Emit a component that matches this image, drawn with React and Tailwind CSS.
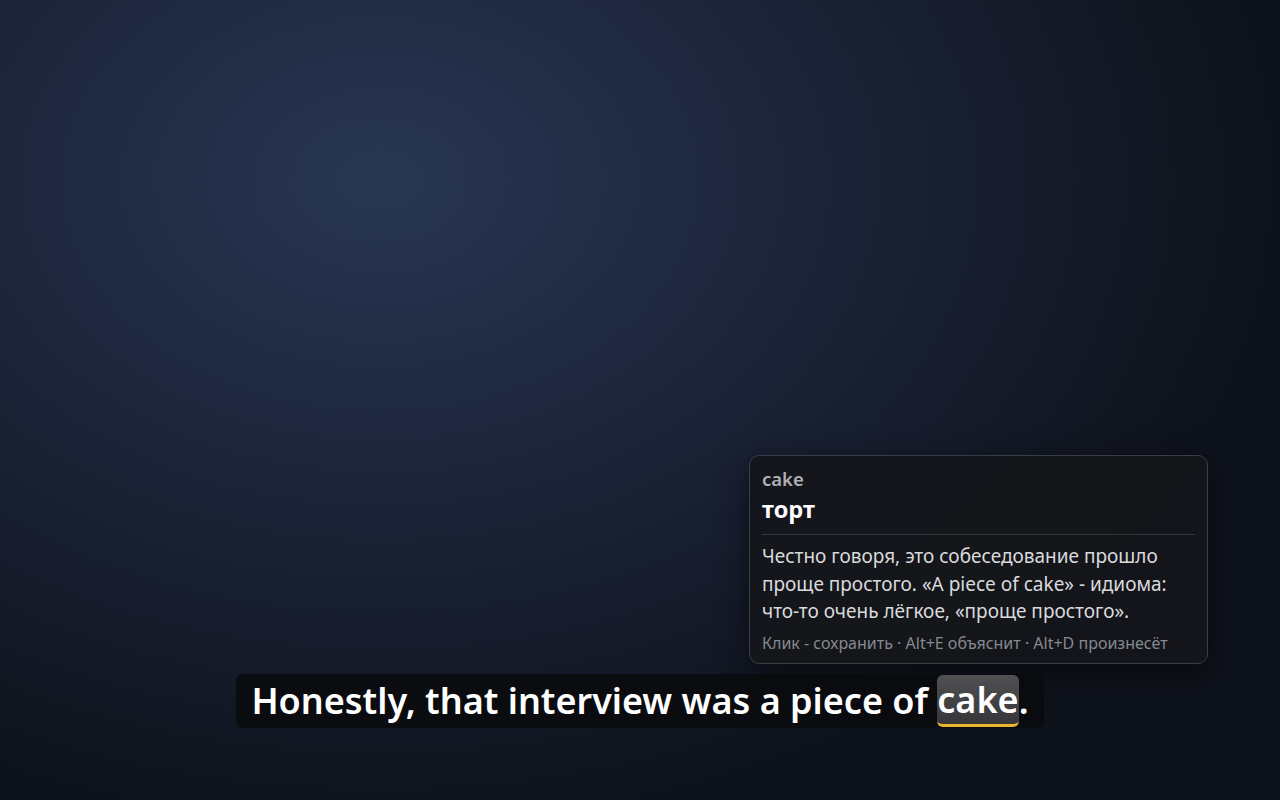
const App = () => {
    return (
        <div
            className="relative h-[800px] w-[1280px] overflow-hidden bg-[#0e121b] bg-[radial-gradient(ellipse_900px_650px_at_380px_180px,#293754_0%,#1c253a_45%,#0e121b_100%)]"
            style={{ fontFamily: '"Segoe UI", "Noto Sans", "Open Sans", sans-serif' }}
        >
            {/* Translation popup */}
            <div className="absolute left-[749px] top-[455px] w-[459px] rounded-[10px] border border-[#3a3d45] bg-[#15161a]/95 px-3 pt-[10px] pb-[9px] shadow-[0_10px_30px_rgba(0,0,0,0.5)]">
                <div className="text-[18.5px] leading-[26px] font-semibold text-[#aeb0b5]">cake</div>
                <div className="mt-[3px] text-[23.5px] leading-[28px] font-bold text-white">торт</div>
                <div className="mt-[11px] h-px bg-[#34363c]" />
                <p className="mt-[8px] text-[19px] leading-[27.5px] text-[#d9dadd]">
                    Честно говоря, это собеседование прошло проще простого. «A piece of cake» - идиома: что-то очень лёгкое, «проще простого».
                </p>
                <div className="mt-[6px] text-[16px] leading-[22px] text-[#868990]">
                    Клик - сохранить · Alt+E объяснит · Alt+D произнесёт
                </div>
            </div>

            {/* Subtitle line */}
            <div className="absolute inset-x-0 top-[674px] flex justify-center">
                <div className="flex items-center rounded-md bg-[#0a0b0e]/90 px-[15px] text-[36px] leading-[54px] font-semibold text-white">
                    <span>Honestly, that interview was a piece of&nbsp;</span>
                    <span className="rounded-md border-b-[3px] border-[#e8b730] bg-gradient-to-b from-[#505053] to-[#37373a] leading-[49px]">
                        cake
                    </span>
                    <span>.</span>
                </div>
            </div>
        </div>
    );
};

export default App;
